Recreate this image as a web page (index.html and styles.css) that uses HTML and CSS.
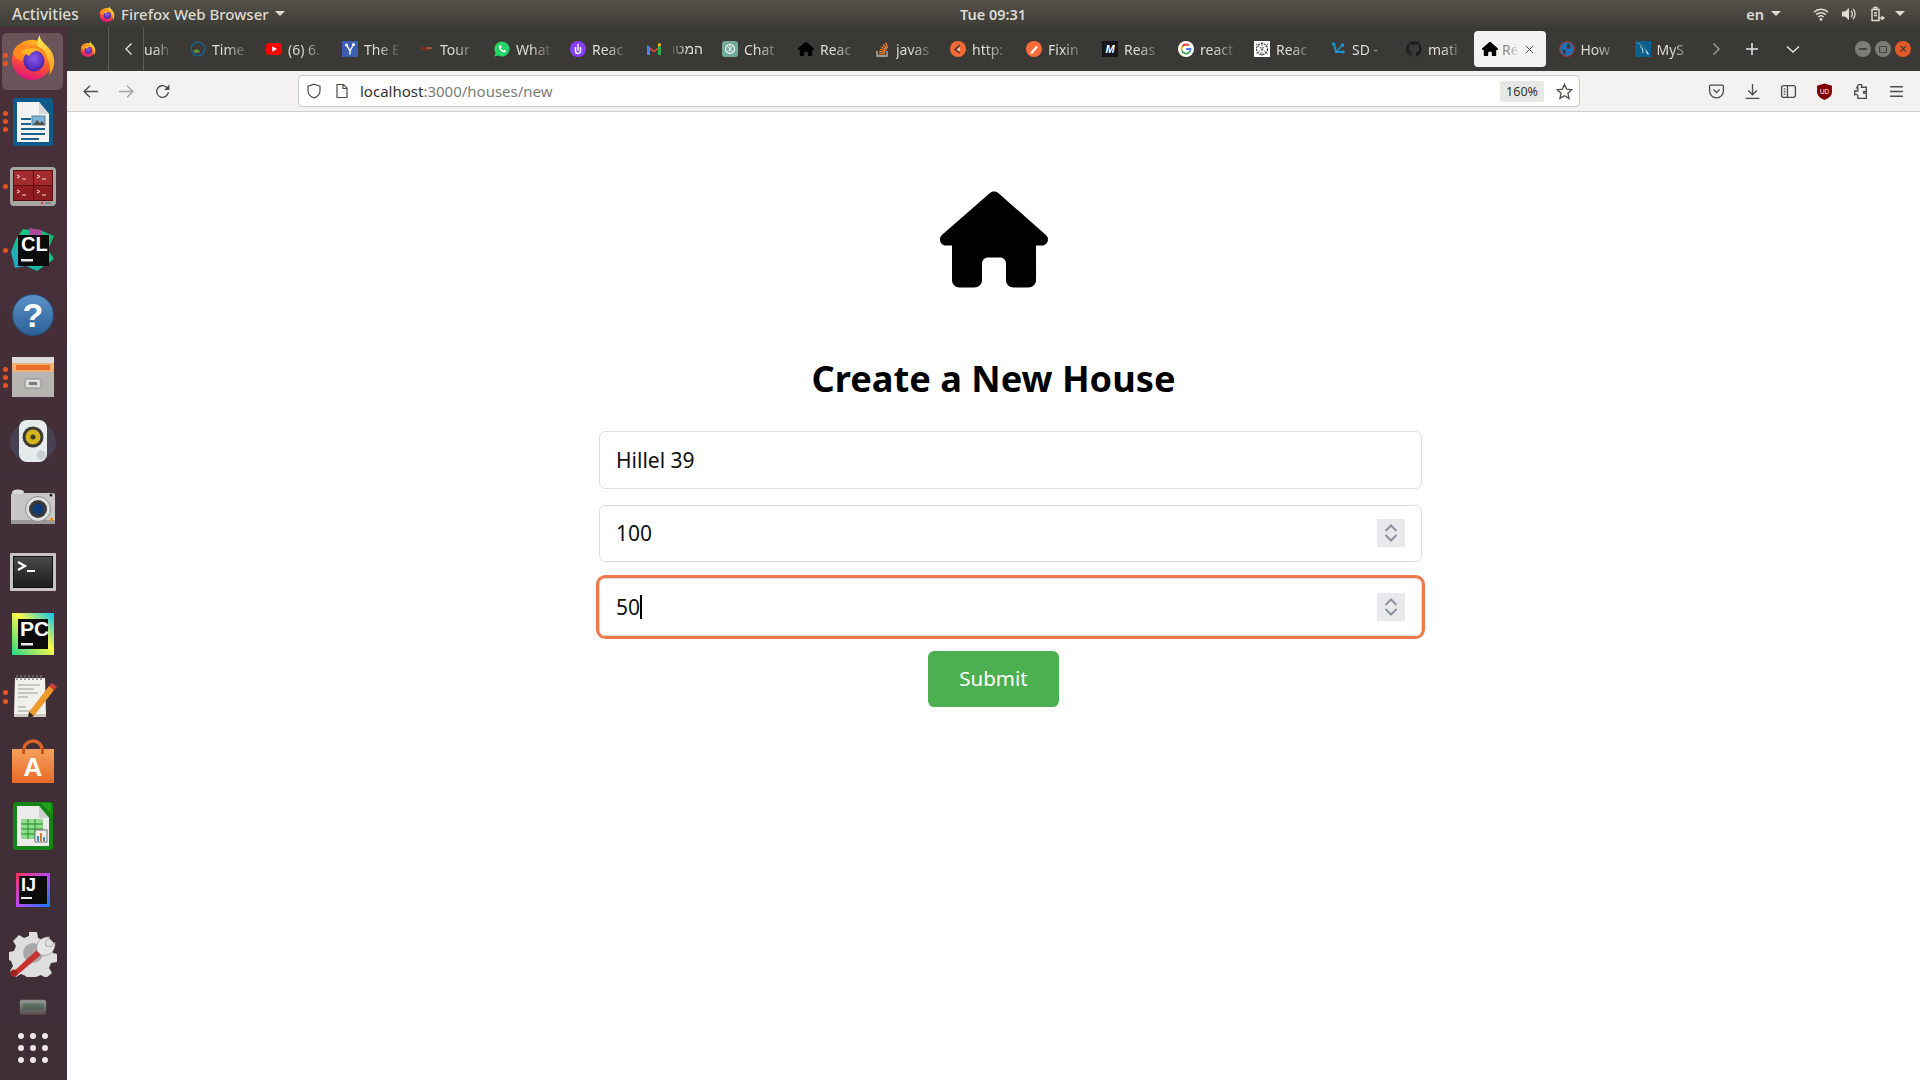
FILE: index.html
```html
<!DOCTYPE html>
<html lang="en">
<head>
<meta charset="utf-8">
<title>Create a New House</title>
<link rel="stylesheet" href="styles.css">
</head>
<body>
<svg class="defs" aria-hidden="true">
  <defs>
    <linearGradient id="ffBody" x1="0.7" y1="0.1" x2="0.4" y2="1"><stop offset="0" stop-color="#ffb020"/><stop offset="0.5" stop-color="#ff5a2a"/><stop offset="1" stop-color="#e3127e"/></linearGradient>
    <linearGradient id="ffFlame" x1="0.4" y1="0" x2="0.6" y2="1"><stop offset="0" stop-color="#ffe84a"/><stop offset="1" stop-color="#ff9a1f"/></linearGradient>
    <radialGradient id="ffCore" cx="0.5" cy="0.4" r="0.6"><stop offset="0" stop-color="#8a5cf0"/><stop offset="1" stop-color="#4a1fa8"/></radialGradient>
    <linearGradient id="clGrad" x1="0" y1="1" x2="1" y2="0"><stop offset="0" stop-color="#1ea0d8"/><stop offset="0.5" stop-color="#18c48a"/><stop offset="1" stop-color="#16b46a"/></linearGradient>
    <linearGradient id="pcGrad" x1="0" y1="1" x2="1" y2="0"><stop offset="0" stop-color="#21d789"/><stop offset="0.55" stop-color="#fcf84a"/><stop offset="1" stop-color="#07c3f2"/></linearGradient>
    <linearGradient id="ijGrad" x1="0" y1="0" x2="1" y2="1"><stop offset="0" stop-color="#fe315d"/><stop offset="0.5" stop-color="#b74af7"/><stop offset="1" stop-color="#087cfa"/></linearGradient>
    <linearGradient id="helpGrad" x1="0" y1="0" x2="0" y2="1"><stop offset="0" stop-color="#5b93c9"/><stop offset="1" stop-color="#2c5f95"/></linearGradient>
    <linearGradient id="storeGrad" x1="0" y1="0" x2="0" y2="1"><stop offset="0" stop-color="#f4a05d"/><stop offset="1" stop-color="#ea6a26"/></linearGradient>
    <linearGradient id="termGrad" x1="0" y1="0" x2="0" y2="1"><stop offset="0" stop-color="#4a4a4a"/><stop offset="1" stop-color="#1c1c1c"/></linearGradient>
    <symbol id="house" viewBox="0 0 576 512"><path d="M575.8 255.5c0 18-15 32.1-32 32.1h-32l.7 160.2c0 2.7-.2 5.4-.5 8.1V472c0 22.1-17.9 40-40 40H456c-1.1 0-2.2 0-3.3-.1c-1.4 .1-2.8 .1-4.2 .1H416 392c-22.1 0-40-17.9-40-40V448 384c0-17.7-14.3-32-32-32H256c-17.7 0-32 14.3-32 32v64 24c0 22.1-17.9 40-40 40H160 128.1c-1.5 0-3-.1-4.5-.2c-1.2 .1-2.4 .2-3.6 .2H104c-22.1 0-40-17.9-40-40V360c0-.9 0-1.9 .1-2.8V287.6H32c-18 0-32-14-32-32.1c0-9 3-17 10-24L266.4 8c7-7 15-8 22-8s15 2 21 7L564.8 231.5c8 7 12 15 11 24z"/></symbol>
    <symbol id="firefox" viewBox="0 0 48 48">
      <circle cx="23" cy="27" r="21" fill="url(#ffBody)"/>
      <path d="M31 1c0 7 8 10 12 17 5 8 4 18-2 25 2-10-1-20-9-26-5-4-4-11-1-16z" fill="url(#ffFlame)"/>
      <path d="M3 19c2-5 5-8 9-9-1 3 0 4 2 5 6-4 16-4 22 3 2 3 3 6 3 10-3-6-9-10-16-9-7 1-10 5-10 9-5-1-9-4-10-9z" fill="#ff8a1e"/>
      <circle cx="25" cy="28" r="11" fill="url(#ffCore)"/>
      <path d="M11 19c5-5 14-6 21-2-5 0-10 2-12 6-3-2-6-3-9-4z" fill="#ffb52a"/>
    </symbol>
  </defs>
</svg>

<header class="topbar">
  <span class="activities">Activities</span>
  <span class="app-menu">
    <svg class="fav"><use href="#firefox"/></svg>
    <span>Firefox Web Browser</span>
    <i class="caret"></i>
  </span>
  <time class="clock">Tue 09:31</time>
  <span class="status">
    <span class="lang">en</span><i class="caret caret-lang"></i>
    <svg class="status-icon wifi" viewBox="0 0 16 16"><path d="M1 6.2a10 10 0 0 1 14 0M3.2 8.6a7 7 0 0 1 9.6 0M5.4 11a3.8 3.8 0 0 1 5.2 0" fill="none" stroke="#dfdcd4" stroke-width="1.5"/><circle cx="8" cy="13.4" r="1.4" fill="#dfdcd4"/></svg>
    <svg class="status-icon vol" viewBox="0 0 16 16"><path d="M1 5.5h3L8 2v12L4 10.500H1z" fill="#dfdcd4"/><path d="M10 5a4 4 0 0 1 0 6M12 3a7 7 0 0 1 0 10" fill="none" stroke="#dfdcd4" stroke-width="1.3"/></svg>
    <svg class="status-icon batt" viewBox="0 0 16 16"><path d="M3 3.500h7v11H3zM5 1.500h3v2H5z" fill="none" stroke="#dfdcd4" stroke-width="1.4"/><path d="M5 7h3M5 9.500h3M9 12h6M12.500 10l2.500 2-2.500 2" fill="none" stroke="#dfdcd4" stroke-width="1.3"/></svg>
    <i class="caret caret-end"></i>
  </span>
</header>

<div class="desktop">
  <nav class="dock">
    <div class="dock-item active"><i class="run run-a"></i><i class="run run-b"></i><svg class="dock-icon"><use href="#firefox"/></svg></div>

    <div class="dock-item"><i class="run run-a3"></i><i class="run run-b3"></i><i class="run run-c3"></i>
      <svg class="dock-icon" viewBox="0 0 48 48"><rect x="4" y="0" width="40" height="48" rx="3" fill="#0e5a8a"/><path d="M8 4h22l10 12v28H8z" fill="#f3f3f3"/><path d="M30 4l10 12H30z" fill="#d8d8d8"/><path d="M32 1h10v10z" fill="#0e5a8a"/><path d="M12 20h10v2H12zM12 25h10v2H12zM12 30h24v2H12zM12 35h24v2H12zM12 40h18v2H12z" fill="#19648f"/><rect x="23" y="18" width="13" height="9" fill="#7ab2d8" stroke="#5d7f99"/><path d="M24 27l4-5 3 3 2-2 3 4z" fill="#554"/></svg></div>

    <div class="dock-item"><i class="run run-one"></i>
      <svg class="dock-icon" viewBox="0 0 48 48"><rect x="1" y="5" width="46" height="39" rx="4" fill="#a6a6a2"/><rect x="4" y="8" width="40" height="31" fill="#5c0c0e"/><rect x="5" y="9" width="19" height="14" fill="#a32a2d"/><rect x="25" y="9" width="18" height="14" fill="#a32a2d"/><rect x="5" y="24" width="19" height="14" fill="#8f1c1f"/><rect x="25" y="24" width="18" height="14" fill="#8f1c1f"/><path d="M8 13l3 1.500-3 1.500M13 17h4M28 13l3 1.500-3 1.500M33 17h4M8 28l3 1.500-3 1.500M13 33h4M28 28l3 1.500-3 1.500M33 33h4" fill="none" stroke="#f2d8d8" stroke-width="1"/><rect x="32" y="40" width="2" height="2" fill="#d33"/><rect x="36" y="40" width="6" height="2" fill="#888"/></svg></div>

    <div class="dock-item"><i class="run run-one"></i>
      <svg class="dock-icon" viewBox="0 0 48 48"><path d="M14 3l11 2 6-1 14 6-6 14 6 9-17 12-11-5-11 2-4-16 5-13z" fill="url(#clGrad)"/><path d="M20 2l12 2 3 10-14 2z" fill="#b04a9c"/><rect x="9" y="9" width="31" height="31" fill="#0b0b0b"/><text x="12" y="25" class="logo-text logo-20">CL</text><rect x="12" y="33" width="12" height="2.500" fill="#e8e8e8"/></svg></div>

    <div class="dock-item">
      <svg class="dock-icon" viewBox="0 0 48 48"><circle cx="24" cy="25" r="20.500" fill="url(#helpGrad)" stroke="#235079"/><text x="24" y="37" text-anchor="middle" class="logo-text logo-34">?</text></svg></div>

    <div class="dock-item"><i class="run run-a3"></i><i class="run run-b3"></i><i class="run run-c3"></i>
      <svg class="dock-icon" viewBox="0 0 48 48"><rect x="3" y="3" width="42" height="6" fill="#dcdcdc"/><rect x="3" y="9" width="42" height="9" fill="#f1b27a"/><rect x="7" y="11" width="34" height="5" fill="#e76f2a"/><rect x="3" y="18" width="42" height="25" fill="#b6b5b1"/><rect x="16" y="25" width="16" height="9" rx="1" fill="#dcdcd8" stroke="#8b8b87"/><rect x="20" y="28" width="8" height="3" fill="#777"/></svg></div>

    <div class="dock-item">
      <svg class="dock-icon" viewBox="0 0 48 48"><ellipse cx="24" cy="24" rx="23" ry="20" fill="#4e5f7c" opacity="0.4"/><rect x="10" y="2" width="28" height="42" rx="8" fill="#e6ebec"/><circle cx="24" cy="19" r="10.500" fill="#3b3b32"/><circle cx="24" cy="19" r="7.500" fill="#d3b41f"/><circle cx="24" cy="19" r="2.500" fill="#3d3a25"/><circle cx="32" cy="37" r="4.500" fill="#c9cfd0"/></svg></div>

    <div class="dock-item">
      <svg class="dock-icon" viewBox="0 0 48 48"><rect x="2" y="11" width="44" height="31" rx="2" fill="#c7c7c7"/><ellipse cx="9" cy="10" rx="6" ry="2.500" fill="#d8d8d8"/><rect x="2" y="38" width="44" height="4" fill="#9a9a9a"/><circle cx="29" cy="27" r="12.500" fill="#e0e0e0" stroke="#8a8a8a"/><circle cx="29" cy="27" r="9" fill="#3a3a3a"/><circle cx="29" cy="27" r="5.500" fill="#0f3a78"/><rect x="41" y="36" width="3" height="3" fill="#e78c1c"/><circle cx="42" cy="13" r="1.500" fill="#222"/></svg></div>

    <div class="dock-item">
      <svg class="dock-icon" viewBox="0 0 48 48"><rect x="1" y="7" width="46" height="38" rx="1" fill="#c5c5c3"/><rect x="4" y="10" width="40" height="32" fill="#111"/><rect x="5" y="11" width="38" height="30" fill="url(#termGrad)"/><path d="M9 16l7 4-7 4" fill="none" stroke="#fff" stroke-width="2.200"/><rect x="18" y="24" width="8" height="2" fill="#fff"/></svg></div>

    <div class="dock-item">
      <svg class="dock-icon" viewBox="0 0 48 48"><rect x="3" y="3" width="42" height="42" fill="url(#pcGrad)"/><rect x="9" y="9" width="30" height="30" fill="#0b0b0b"/><text x="11" y="26" class="logo-text logo-21">PC</text><rect x="12" y="33" width="12" height="2.500" fill="#eee"/></svg></div>

    <div class="dock-item"><i class="run run-ged-a"></i><i class="run run-ged-b"></i>
      <svg class="dock-icon" viewBox="0 0 48 48"><path d="M6 4h30l1 36H5z" fill="#f1f1ec"/><path d="M5 40h32v3H5z" fill="#c9c9c2"/><path d="M8 1v5M12 1v5M16 1v5M20 1v5M24 1v5M28 1v5M32 1v5" stroke="#777" stroke-width="1.400"/><path d="M9 11h22M9 15h16M9 19h20M9 23h10M9 33h8M9 37h12" stroke="#9a9a9a" stroke-width="1"/><path d="M20 38l20-26 5 4-20 26-6 2z" fill="#ef9a2d"/><path d="M40 12l3-3 5 4-3 3z" fill="#d83b3b"/><path d="M19 44l1-6 5 4z" fill="#222"/></svg></div>

    <div class="dock-item">
      <svg class="dock-icon" viewBox="0 0 48 48"><path d="M15 12c0-12 18-12 18 0" fill="none" stroke="#d9622a" stroke-width="3.500"/><path d="M3 11h42v34H3z" fill="url(#storeGrad)"/><rect x="13" y="10" width="3" height="6" fill="#c9531e"/><rect x="32" y="10" width="3" height="6" fill="#c9531e"/><text x="24" y="38" text-anchor="middle" class="logo-text logo-26">A</text></svg></div>

    <div class="dock-item">
      <svg class="dock-icon" viewBox="0 0 48 48"><rect x="4" y="0" width="40" height="48" rx="3" fill="#148414"/><path d="M8 4h22l10 12v28H8z" fill="#ececec"/><path d="M30 4l10 12H30z" fill="#cfcfcf"/><path d="M32 1h10v10z" fill="#27a01e"/><rect x="12" y="17" width="22" height="20" fill="#8fdc8f"/><path d="M12 22h22M12 27h22M12 32h22M19 17v20M26 17v20" stroke="#1f8f1f" stroke-width="1"/><rect x="26" y="28" width="12" height="12" fill="#eee" stroke="#777"/><rect x="28" y="34" width="2" height="5" fill="#2c8fd8"/><rect x="31" y="31" width="2" height="8" fill="#e8761e"/><rect x="34" y="35" width="2" height="4" fill="#2c8fd8"/></svg></div>

    <div class="dock-item">
      <svg class="dock-icon" viewBox="0 0 48 48"><rect x="7" y="7" width="34" height="34" fill="url(#ijGrad)"/><rect x="10" y="10" width="28" height="28" fill="#0b0b0b"/><text x="12" y="25" class="logo-text logo-18">IJ</text><rect x="12" y="31" width="11" height="2" fill="#eee"/></svg></div>

    <div class="dock-item">
      <svg class="dock-icon settings-icon" viewBox="0 0 48 48"><path d="M20 3h8l1 6 5 2 5-3 6 6-3 5 2 5 4 1v8l-6 1-2 5 3 5-6 5-5-3-5 2-1 4h-8l-1-5-5-2-5 3-6-6 3-5-2-5-2-1v-8l5-1 2-5-3-5 6-6 5 3 5-2z" fill="#dedede"/><circle cx="24" cy="24" r="10" fill="#a8a8a8"/><path d="M3 44l27-25 4 5-28 24z" fill="#c8322e"/><circle cx="5" cy="44" r="3.500" fill="#a02320"/><path d="M28 22c-2-8 4-15 13-14l-5 5 1 4 5 1 4-5c1 9-6 15-14 13z" fill="#e6e6e6" stroke="#888" stroke-width="0.600"/></svg></div>

    <div class="dock-item dock-fade">
      <svg class="dock-icon" viewBox="0 0 48 48"><rect x="3" y="14" width="42" height="24" rx="3" fill="#8d8d8b"/><rect x="7" y="20" width="34" height="10" fill="#5f7d66"/></svg></div>

    <div class="dock-apps">
      <i class="grid-dot"></i><i class="grid-dot"></i><i class="grid-dot"></i>
      <i class="grid-dot"></i><i class="grid-dot"></i><i class="grid-dot"></i>
      <i class="grid-dot"></i><i class="grid-dot"></i><i class="grid-dot"></i>
    </div>
  </nav>

  <div class="browser">
    <div class="tabbar">
      <div class="ff-view"><svg class="fav"><use href="#firefox"/></svg></div>
      <div class="scroll-left"><svg class="chev" viewBox="0 0 16 16"><path d="M10.500 2.500L5 8l5.500 5.500"/></svg></div>
      <div class="tab-cut"><span class="tab-title">uah</span></div>

      <div class="tab"><svg class="fav" viewBox="0 0 16 16"><circle cx="8" cy="8" r="6.800" fill="none" stroke="#1d5f8f" stroke-width="1.400"/><path d="M3 10c3-3 6-2 7 1-3 2-6 1-7-1z" fill="#5d8f3d"/></svg><span class="tab-title">Time</span></div>
      <div class="tab"><svg class="fav" viewBox="0 0 16 16"><rect y="2" width="16" height="12" rx="3.500" fill="#f00"/><path d="M6.300 5.200v5.600L11 8z" fill="#fff"/></svg><span class="tab-title">(6) 6.</span></div>
      <div class="tab"><svg class="fav" viewBox="0 0 16 16"><rect width="16" height="16" fill="#3e5db0"/><path d="M4.500 4L8 10v3.500M11.500 3.500L8 10" fill="none" stroke="#fff" stroke-width="1.400"/><circle cx="4.500" cy="4" r="1.500" fill="#fff"/><circle cx="11.500" cy="3.500" r="1.500" fill="#fff"/></svg><span class="tab-title">The E</span></div>
      <div class="tab"><svg class="fav" viewBox="0 0 16 16"><path d="M2 6h12v1.500L9 10H7L2 7.500z" fill="#7a2e22"/><path d="M9 6.500h5v1H9z" fill="#b7873a"/></svg><span class="tab-title">Tour</span></div>
      <div class="tab"><svg class="fav" viewBox="0 0 16 16"><path d="M8 .5a7.500 7.500 0 0 0-6.500 11.300L.5 15.500l3.800-1A7.500 7.500 0 1 0 8 .5z" fill="#25d366"/><path d="M5.500 4.300c-1 .8-1 2.300.2 4 1.200 1.800 3 3.200 4.600 3.200 1 0 1.800-.8 1.700-1.700l-1.800-1-.9.900c-1-.4-2-1.400-2.500-2.500l.9-.9-.9-2z" fill="#fff"/></svg><span class="tab-title">What</span></div>
      <div class="tab"><svg class="fav" viewBox="0 0 16 16"><circle cx="8" cy="8" r="8" fill="#8a3ffc"/><path d="M5.500 6v4a2.500 2.500 0 0 0 5 0V6" fill="none" stroke="#fff" stroke-width="1.500"/><path d="M8 3v7" stroke="#fff" stroke-width="1.300"/></svg><span class="tab-title">Reac</span></div>
      <div class="tab"><svg class="fav" viewBox="0 0 16 16"><path d="M1 14V4l7 5.500L15 4v10h-3V8.500l-4 3-4-3V14z" fill="#ea4335"/><path d="M1 4v10h3V6z" fill="#4285f4"/><path d="M15 4v10h-3V6z" fill="#34a853"/><path d="M12 6l3-2V3l-2-1-1 1z" fill="#fbbc04"/></svg><span class="tab-title tab-rtl" dir="rtl">המטו</span></div>
      <div class="tab"><svg class="fav" viewBox="0 0 16 16"><rect width="16" height="16" rx="3" fill="#74aa9c"/><circle cx="8" cy="8" r="4.500" fill="none" stroke="#fff" stroke-width="1.200"/><path d="M5 5l6 6M11 5l-6 6M8 3.500v9" stroke="#fff" stroke-width="0.700"/></svg><span class="tab-title">Chat</span></div>
      <div class="tab"><svg class="fav"><use href="#house"/></svg><span class="tab-title">Reac</span></div>
      <div class="tab"><svg class="fav" viewBox="0 0 16 16"><path d="M3 10v5h10v-5" fill="none" stroke="#bcbbbb" stroke-width="1.300"/><path d="M5 12.800h6M5.200 10.500l6 .6M6 8.200l5.700 1.600M7.300 5.800l5 3M9.200 3.500l3.800 4.300M11.500 1.500l2.300 5.200" stroke="#f48024" stroke-width="1.300"/></svg><span class="tab-title tab-wide">javas</span></div>
      <div class="tab"><svg class="fav" viewBox="0 0 16 16"><circle cx="8" cy="8" r="8" fill="#f76935"/><path d="M10 4L5 8.500l5 3.500" fill="none" stroke="#3b3935" stroke-width="1.500"/><path d="M9.500 6l-2 3 2 1z" fill="#fff"/></svg><span class="tab-title">http:</span></div>
      <div class="tab"><svg class="fav" viewBox="0 0 16 16"><circle cx="8" cy="8" r="8" fill="#ff6c37"/><path d="M4 12l6-7 2 1-6 7z" fill="#fff"/></svg><span class="tab-title">Fixin</span></div>
      <div class="tab"><svg class="fav" viewBox="0 0 16 16"><rect width="16" height="16" fill="#14141c"/><text x="8" y="12" text-anchor="middle" class="logo-text logo-fav">M</text></svg><span class="tab-title">Reas</span></div>
      <div class="tab"><svg class="fav" viewBox="0 0 16 16"><circle cx="8" cy="8" r="8" fill="#fff"/><path d="M8 3.500a4.500 4.500 0 0 1 3 1.200" fill="none" stroke="#ea4335" stroke-width="1.800"/><path d="M4.300 5.500a4.500 4.500 0 0 1 3.700-2" fill="none" stroke="#ea4335" stroke-width="1.800"/><path d="M3.800 9.500a4.500 4.500 0 0 1 .5-4" fill="none" stroke="#fbbc05" stroke-width="1.800"/><path d="M11 11.500a4.500 4.500 0 0 1-7.200-2" fill="none" stroke="#34a853" stroke-width="1.800"/><path d="M8 8h4.500a4.500 4.500 0 0 1-1.500 3.500" fill="none" stroke="#4285f4" stroke-width="1.800"/></svg><span class="tab-title">react</span></div>
      <div class="tab"><svg class="fav" viewBox="0 0 16 16"><rect width="16" height="16" fill="#fff"/><circle cx="8" cy="8" r="5.500" fill="none" stroke="#333" stroke-width="1.200" stroke-dasharray="2 1"/><path d="M2 3l12 10M14 3L2 13M8 1v14" stroke="#444" stroke-width="0.900" stroke-dasharray="1.500 1"/></svg><span class="tab-title">Reac</span></div>
      <div class="tab"><svg class="fav" viewBox="0 0 16 16"><path d="M4 3l2 8h6" fill="none" stroke="#1c96d1" stroke-width="2"/><circle cx="3.500" cy="3" r="1.800" fill="#1c96d1"/><circle cx="12.500" cy="4" r="1.800" fill="#1c96d1"/><circle cx="13" cy="11" r="1.800" fill="#1c96d1"/><path d="M6 11l6.500-7" stroke="#1c96d1" stroke-width="1.500"/></svg><span class="tab-title">SD -</span></div>
      <div class="tab"><svg class="fav" viewBox="0 0 16 16"><path d="M8 0a8 8 0 0 0-2.500 15.600c.4 0 .5-.2.500-.4v-1.500c-2.200.5-2.700-1-2.700-1-.4-.9-.9-1.200-.9-1.200-.7-.5.100-.5.100-.5.800.1 1.200.8 1.200.8.700 1.200 1.900.9 2.300.7.100-.5.300-.9.500-1.100-1.800-.2-3.600-.9-3.600-4 0-.9.300-1.600.8-2.100-.1-.2-.4-1 .1-2.100 0 0 .7-.2 2.200.8a7.500 7.500 0 0 1 4 0c1.500-1 2.200-.8 2.200-.8.400 1.100.2 1.900.1 2.100.5.600.8 1.300.8 2.100 0 3.100-1.900 3.700-3.700 3.900.3.300.6.800.6 1.500v2.200c0 .2.100.5.500.4A8 8 0 0 0 8 0z" fill="#1b1f23"/></svg><span class="tab-title">mati</span></div>

      <div class="tab tab-active"><svg class="fav"><use href="#house"/></svg><span class="tab-title">Re</span><svg class="tab-x" viewBox="0 0 12 12"><path d="M2 2l8 8M10 2l-8 8"/></svg></div>

      <div class="tab"><svg class="fav" viewBox="0 0 16 16"><circle cx="8" cy="8" r="7.300" fill="#1e6fb5" stroke="#b7362b"/><path d="M9 2l3 3-2 3-3-1zM4 8l3 2-1 4-2-2z" fill="#3b3935"/></svg><span class="tab-title">How</span></div>
      <div class="tab"><svg class="fav" viewBox="0 0 16 16"><rect width="16" height="16" fill="#0d5f8c"/><path d="M1 2c6 0 9 4 11 11l2 1c-1-3-2-4-3-5-2-4-5-6-10-7z" fill="#cfe5ef"/><path d="M5 5c2 1 3 4 3 7" fill="none" stroke="#cfe5ef"/></svg><span class="tab-title">MyS</span></div>

      <div class="bar-btn scroll-right"><svg class="chev chev-dim" viewBox="0 0 16 16"><path d="M5.500 2.500L11 8l-5.500 5.500"/></svg></div>
      <div class="bar-btn new-tab"><svg class="chev chev-plus" viewBox="0 0 16 16"><path d="M8 2v12M2 8h12"/></svg></div>
      <div class="bar-btn list-tabs"><svg class="chev" viewBox="0 0 16 16"><path d="M2 5.500L8 11l6-5.500"/></svg></div>
      <div class="win-btns">
        <span class="win-btn"><i class="win-min"></i></span>
        <span class="win-btn"><i class="win-max"></i></span>
        <span class="win-btn win-close">×</span>
      </div>
    </div>

    <div class="toolbar">
      <svg class="tool tool-back" viewBox="0 0 16 16"><path d="M15 8H2M7.500 2.500L2 8l5.500 5.500"/></svg>
      <svg class="tool tool-dim" viewBox="0 0 16 16"><path d="M1 8h13M8.500 2.500L14 8l-5.500 5.500"/></svg>
      <svg class="tool" viewBox="0 0 16 16"><path d="M13.500 8.500a5.500 5.500 0 1 1-1.800-4.600L14 6"/><path d="M14.500 1.500V6.500H9.500" class="tool-fill"/></svg>
      <div class="urlbar">
        <svg class="url-icon" viewBox="0 0 16 16"><path d="M8 1.200l6 2v4.500c0 3.500-2.500 6-6 7.200-3.500-1.200-6-3.700-6-7.200V3.200z"/></svg>
        <svg class="url-icon page-icon" viewBox="0 0 16 16"><path d="M3 1.500h6.500L13 5v9.500H3zM9 1.500V5.500h4"/></svg>
        <span class="url"><b>localhost</b>:3000/houses/new</span>
        <span class="zoom-badge">160%</span>
        <svg class="url-icon star" viewBox="0 0 16 16"><path d="M8 1.300l2 4.500 4.900.5-3.700 3.300 1.100 4.900L8 12l-4.300 2.500 1.100-4.900L1.100 6.300 6 5.800z"/></svg>
      </div>
      <div class="tool-right">
        <svg class="tool" viewBox="0 0 16 16"><path d="M2.500 2h11a1 1 0 0 1 1 1v4.500a6.500 6.500 0 0 1-13 0V3a1 1 0 0 1 1-1z"/><path d="M5 6l3 3 3-3"/></svg>
        <svg class="tool" viewBox="0 0 16 16"><path d="M8 1v10M4 7l4 4 4-4M1.500 14.500h13"/></svg>
        <svg class="tool" viewBox="0 0 16 16"><rect x="1.500" y="2.500" width="13" height="11" rx="2"/><path d="M7 2.500v11M3.500 5.500H5M3.500 8H5M3.500 10.500H5"/></svg>
        <svg class="tool" viewBox="0 0 16 16"><path d="M8 .5l7 2v6c0 3.500-3 6-7 7.500-4-1.500-7-4-7-7.500v-6z" class="ublock"/><text x="8" y="10.500" text-anchor="middle" class="logo-text logo-ub">UD</text></svg>
        <svg class="tool" viewBox="0 0 16 16"><path d="M6 1.500h3v2.500h4.500v4H11v1.500h2.500v5h-8v-2.500a2 2 0 0 0-3-1V7.500h3V4.500H4.500z"/></svg>
        <svg class="tool" viewBox="0 0 16 16"><path d="M2 3.500h12M2 8h12M2 12.500h12"/></svg>
      </div>
    </div>

    <main class="page">
      <svg class="hero-house"><use href="#house"/></svg>
      <h1 class="title">Create a New House</h1>
      <form class="house-form">
        <div class="field"><span class="field-value">Hillel 39</span></div>
        <div class="field">
          <span class="field-value">100</span>
          <span class="spin"><svg viewBox="0 0 14 20"><path d="M1.500 8L7 2.500 12.500 8M1.500 12L7 17.500 12.500 12"/></svg></span>
        </div>
        <div class="field field-focus">
          <span class="field-value">50<i class="text-caret"></i></span>
          <span class="spin"><svg viewBox="0 0 14 20"><path d="M1.500 8L7 2.500 12.500 8M1.500 12L7 17.500 12.500 12"/></svg></span>
        </div>
        <div class="form-actions"><button type="button" class="submit">Submit</button></div>
      </form>
    </main>
  </div>
</div>
</body>
</html>
```

FILE: styles.css
```css
* { box-sizing: border-box; }
html, body { margin: 0; height: 100%; overflow: hidden; }
body { display: flex; flex-direction: column; width: 1920px; height: 1080px; font-family: "Noto Sans", "Open Sans", sans-serif; background: #fff; }
.defs { width: 0; height: 0; display: block; position: absolute; }
i { display: block; font-style: normal; }

/* GNOME top bar */
.topbar { flex: none; height: 27px; display: flex; align-items: center; position: relative; padding-left: 12px; background: linear-gradient(#55524b, #3e3c37); color: #dcdad2; font-size: 15px; font-weight: 500; }
.activities { width: 87px; font-size: 15.500px; }
.app-menu { display: flex; align-items: center; gap: 6px; }
.caret { width: 0; height: 0; border-left: 5px solid transparent; border-right: 5px solid transparent; border-top: 5px solid #dcdad2; }
.clock { position: absolute; left: 957px; width: 72px; text-align: center; font-size: 14.500px; font-weight: 600; }
.status { margin-left: auto; display: flex; align-items: center; padding-right: 15px; }
.lang { font-weight: 600; font-size: 14.500px; }
.caret-lang { margin-left: 7px; margin-right: 32px; }
.status-icon { width: 16px; height: 16px; margin-right: 12px; }
.batt { margin-right: 10px; }

.desktop { flex: 1; display: flex; min-height: 0; }

/* Dock */
.dock { flex: none; width: 67px; padding: 6px 1px 0 0; display: flex; flex-direction: column; align-items: center; gap: 14px; background: linear-gradient(#47303a, #3e2e36); }
.dock-item { position: relative; width: 66px; height: 50px; flex: none; display: flex; align-items: center; justify-content: center; }
.dock-item.active::before { content: ""; position: absolute; left: 2px; right: 3px; top: 0; bottom: -7px; border-radius: 5px; background: #6a5459; }
.dock-icon { position: relative; width: 48px; height: 48px; }
.dock-item.active .dock-icon { width: 46px; height: 46px; margin-top: -3px; }
.settings-icon { margin-top: -3px; }
.dock-fade { height: 32px; margin-top: -3px; -webkit-mask-image: linear-gradient(#000 40%, transparent 95%); mask-image: linear-gradient(#000 40%, transparent 95%); }
.dock-fade .dock-icon { height: 30px; width: 30px; }
.dock-apps { display: grid; grid-template-columns: repeat(3, 6px); gap: 6px; margin-top: -3px; }
.grid-dot { width: 6px; height: 6px; border-radius: 50%; background: #ece9e6; }
.run { position: absolute; left: 3px; width: 5px; height: 5px; border-radius: 50%; background: #e95420; }
.run-a { top: 20px; } .run-b { top: 28px; }
.run-a3 { top: 14px; } .run-b3 { top: 22px; } .run-c3 { top: 30px; }
.run-one { top: 23px; }
.run-ged-a { top: 17px; } .run-ged-b { top: 26px; }

.browser { flex: 1; display: flex; flex-direction: column; min-width: 0; }

/* Tab strip */
.tabbar { flex: none; height: 44px; display: flex; align-items: center; background: #3b3935; color: #fbfbfe; font-size: 14px; }
.fav { width: 16px; height: 16px; flex: none; }
.ff-view { width: 42px; height: 44px; flex: none; display: flex; align-items: center; justify-content: center; border-right: 1px solid #5e5c58; }
.scroll-left { width: 35px; height: 44px; flex: none; padding-left: 12px; display: flex; align-items: center; border-right: 1px solid #5e5c58; }
.chev { width: 16px; height: 16px; fill: none; stroke: #e8e8e6; stroke-width: 1.300; }
.chev-dim { stroke: #a5a4a1; }
.chev-plus { stroke-width: 1.500; }
.tab-cut { width: 35px; flex: none; overflow: hidden; }
.tab { width: 76px; height: 36px; flex: none; display: flex; align-items: center; gap: 6px; padding-left: 11px; }
.tab-title { width: 40px; overflow: hidden; white-space: nowrap; color: #dddcd9; -webkit-mask-image: linear-gradient(to right, #000 35%, transparent 95%); mask-image: linear-gradient(to right, #000 35%, transparent 95%); }
.tab-wide { width: 43px; }
.tab-cut .tab-title { display: block; width: 30px; }
.tab-rtl { font-family: "Liberation Sans", "DejaVu Sans", sans-serif; text-align: right; width: 35px; -webkit-mask-image: linear-gradient(to left, #000 45%, transparent 98%); mask-image: linear-gradient(to left, #000 45%, transparent 98%); }
.tab-active { position: relative; background: #f4f3f1; border-radius: 4px; padding-left: 8px; width: 72px; margin: 0 1.500px 0 3px; gap: 4px; }
.tab-active .tab-title { width: 18px; color: #8a8986; }
.tab-x { width: 11px; height: 11px; flex: none; fill: none; stroke: #444; stroke-width: 1; }
.bar-btn { flex: none; display: flex; align-items: center; justify-content: center; }
.scroll-right { width: 31px; margin-left: 1px; }
.new-tab { width: 40px; }
.list-tabs { width: 42px; }
.win-btns { margin-left: 41.500px; display: flex; gap: 4px; }
.win-btn { width: 16px; height: 16px; border-radius: 50%; background: #7d7c78; display: flex; align-items: center; justify-content: center; color: #3b3935; font-size: 14px; line-height: 1; }
.win-min { width: 8px; height: 2px; background: #45443f; }
.win-max { width: 8px; height: 7px; border: 1px solid #45443f; }
.win-close { background: #e2592a; }

/* Nav toolbar */
.toolbar { flex: none; height: 41px; display: flex; align-items: center; background: #f3f2f0; border-bottom: 1px solid #cfcfcd; padding-left: 15px; }
.tool { width: 17px; height: 17px; flex: none; fill: none; stroke: #4c4b48; stroke-width: 1.250; margin-right: 19px; }
.tool-fill { fill: #4c4b48; stroke: none; }
.tool-dim { stroke: #a5a4a1; }
.urlbar { width: 1282px; height: 32px; flex: none; margin-left: 108px; display: flex; align-items: center; background: #fff; border: 1px solid #cbcbc9; border-radius: 4px; padding-left: 7px; font-size: 15px; color: #7c7b78; }
.url-icon { width: 16px; height: 16px; flex: none; fill: none; stroke: #4c4b48; stroke-width: 1.200; margin-right: 12px; }
.page-icon { margin-right: 10px; }
.url { flex: 1; white-space: nowrap; }
.url b { font-weight: 400; color: #33322f; }
.zoom-badge { width: 44px; height: 21px; margin-right: 12px; background: #e7e7e5; border-radius: 3px; display: flex; align-items: center; justify-content: center; font-size: 12.500px; color: #33322f; }
.star { margin: 0 6px 0 0; width: 17px; height: 17px; }
.tool-right { display: flex; align-items: center; margin-left: 128px; }
.tool-right .tool:last-child { margin-right: 0; }
.ublock { fill: #800000; stroke: none; }

/* Page */
.page { flex: 1; display: flex; flex-direction: column; align-items: center; background: #fff; padding-top: 79px; color: #000; }
.hero-house { width: 108px; height: 97px; flex: none; fill: #000; }
.title { margin: 67px 0 30px; height: 46px; line-height: 46px; font-size: 36.200px; font-weight: 700; white-space: nowrap; }
.house-form { width: 789px; display: flex; flex-direction: column; gap: 16px; }
.field { width: 823px; height: 57.600px; flex: none; display: flex; align-items: center; justify-content: space-between; padding: 0 16px; border: 1.600px solid #ddd; border-radius: 6.400px; font-size: 21px; color: #111; }
.field-focus { outline: 3px solid #ee7a4b; border-color: #ddd; }
.field-value { display: flex; align-items: center; }
.text-caret { width: 2px; height: 24px; background: #000; }
.spin { width: 28px; height: 28px; background: #e9e9ed; display: flex; align-items: center; justify-content: center; }
.spin svg { width: 14px; height: 20px; fill: none; stroke: #8f8f9d; stroke-width: 2; }
.form-actions { display: flex; justify-content: center; margin-top: -1px; }
.submit { width: 131px; height: 56px; padding: 0 0 2px; border: 0; border-radius: 6.400px; background: #4caf50; color: #fff; font: 400 20.500px "Noto Sans", "Open Sans", sans-serif; }

/* Text inside drawn logos */
.logo-text { font-family: "Liberation Sans", sans-serif; font-weight: 700; fill: #fff; }
.logo-20 { font-size: 20px; }
.logo-21 { font-size: 21px; }
.logo-18 { font-size: 18px; }
.logo-26 { font-size: 26px; }
.logo-34 { font-size: 34px; }
.logo-fav { font-size: 11px; font-style: italic; }
.logo-ub { font-size: 6px; stroke: none; font-weight: 400; }
```
